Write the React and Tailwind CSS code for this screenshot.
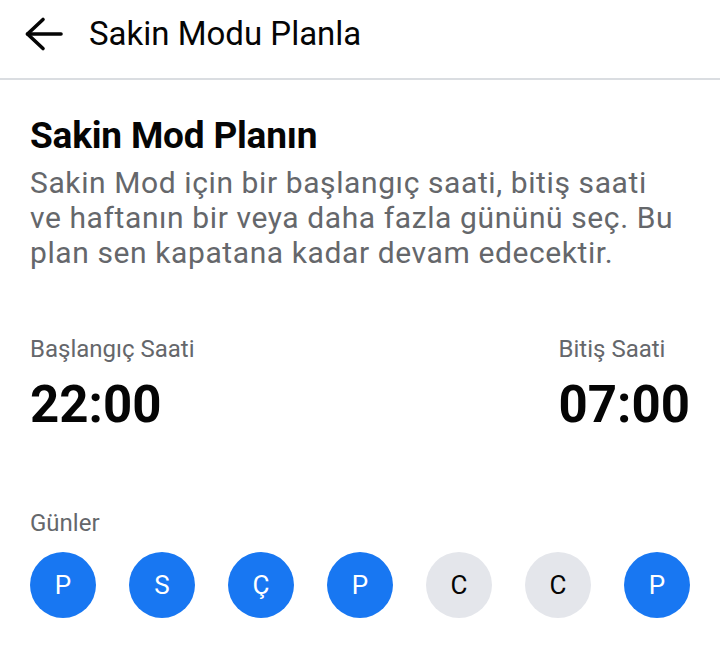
import React, { useState } from 'react';

const days = [
  { key: 'mon', label: 'P', on: true },
  { key: 'tue', label: 'S', on: true },
  { key: 'wed', label: 'Ç', on: true },
  { key: 'thu', label: 'P', on: true },
  { key: 'fri', label: 'C', on: false },
  { key: 'sat', label: 'C', on: false },
  { key: 'sun', label: 'P', on: true },
];

const BackArrow = () => (
  <svg width="40" height="36" viewBox="0 0 40 36" fill="none" stroke="#050505" strokeWidth="3.6" strokeLinecap="round" strokeLinejoin="round">
    <path d="M37 18H3.5" />
    <path d="M19 3.5L3.5 18L19 32.5" />
  </svg>
);

const App = () => {
  const [selected, setSelected] = useState(days.map((d) => d.on));

  const toggleDay = (i) => {
    setSelected((prev) => prev.map((v, j) => (j === i ? !v : v)));
  };

  return (
    <div className="min-h-screen bg-white font-['Roboto',sans-serif] text-[#050505]">
      {/* Top bar */}
      <header className="flex items-center h-[80px] pb-[11px] pl-[24px] border-b-2 border-[#dadde1]">
        <button className="flex items-center">
          <BackArrow />
        </button>
        <h1 className="ml-[25px] text-[33px] leading-[38px] font-normal">Sakin Modu Planla</h1>
      </header>

      <main className="px-[30px] pt-[35px]">
        <h2 className="text-[37px] leading-[42px] font-bold tracking-[-0.2px]">Sakin Mod Planın</h2>
        <p className="mt-[8px] text-[30px] leading-[35px] tracking-[0.6px] text-[#65676b] whitespace-nowrap">
          Sakin Mod için bir başlangıç saati, bitiş saati
          <br />
          ve haftanın bir veya daha fazla gününü seç. Bu
          <br />
          plan sen kapatana kadar devam edecektir.
        </p>

        {/* Start / end time */}
        <div className="mt-[66px] flex justify-between">
          <div>
            <div className="text-[24px] leading-[26px] text-[#65676b]">Başlangıç Saati</div>
            <div className="mt-[14px] text-[51px] leading-[58px] font-bold">22:00</div>
          </div>
          <div>
            <div className="text-[24px] leading-[26px] text-[#65676b]">Bitiş Saati</div>
            <div className="mt-[14px] text-[51px] leading-[58px] font-bold">07:00</div>
          </div>
        </div>

        {/* Days */}
        <div className="mt-[76px] text-[24px] leading-[26px] text-[#65676b]">Günler</div>
        <div className="mt-[16px] flex justify-between">
          {days.map((d, i) => (
            <button
              key={d.key}
              onClick={() => toggleDay(i)}
              className={`w-[66px] h-[66px] rounded-full flex items-center justify-center text-[26px] ${
                selected[i] ? 'bg-[#1877f2] text-white' : 'bg-[#e4e6eb] text-[#050505]'
              }`}
            >
              {d.label}
            </button>
          ))}
        </div>
      </main>
    </div>
  );
};

export default App;
